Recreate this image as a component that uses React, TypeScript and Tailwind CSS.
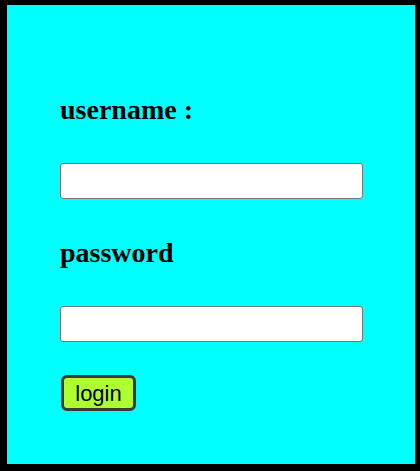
export default function App() {
  return (
    <div className="h-[471px] w-[420px] bg-black pb-[7px] pl-[7px] pr-[5px] pt-[5px]">
      <form
        className="flex h-full flex-col items-start bg-[#00ffff] pl-[53px] pt-[89px]"
        onSubmit={(event) => event.preventDefault()}
      >
        <label
          htmlFor="username"
          className="block text-[28px] font-bold leading-[32px] text-black"
          style={{ fontFamily: '"Liberation Serif", serif' }}
        >
          username :
        </label>
        <input
          id="username"
          type="text"
          className="mt-[37px] h-[36px] w-[303px] rounded-[3px] border border-[#767676] bg-white px-2 outline-none"
        />
        <label
          htmlFor="password"
          className="mt-[38px] block text-[28px] font-bold leading-[32px] text-black"
          style={{ fontFamily: '"Liberation Serif", serif' }}
        >
          password
        </label>
        <input
          id="password"
          type="password"
          className="mt-[37px] h-[36px] w-[303px] rounded-[3px] border border-[#767676] bg-white px-2 outline-none"
        />
        <button
          type="submit"
          className="ml-px mt-[33px] flex h-[36px] w-[75px] items-center justify-center rounded-[6px] border-[3px] border-[#3a3a3a] bg-[#adff2f] pt-[2px] text-[22px] leading-none text-black"
          style={{ fontFamily: '"Liberation Sans", Arial, sans-serif' }}
        >
          login
        </button>
      </form>
    </div>
  );
}
